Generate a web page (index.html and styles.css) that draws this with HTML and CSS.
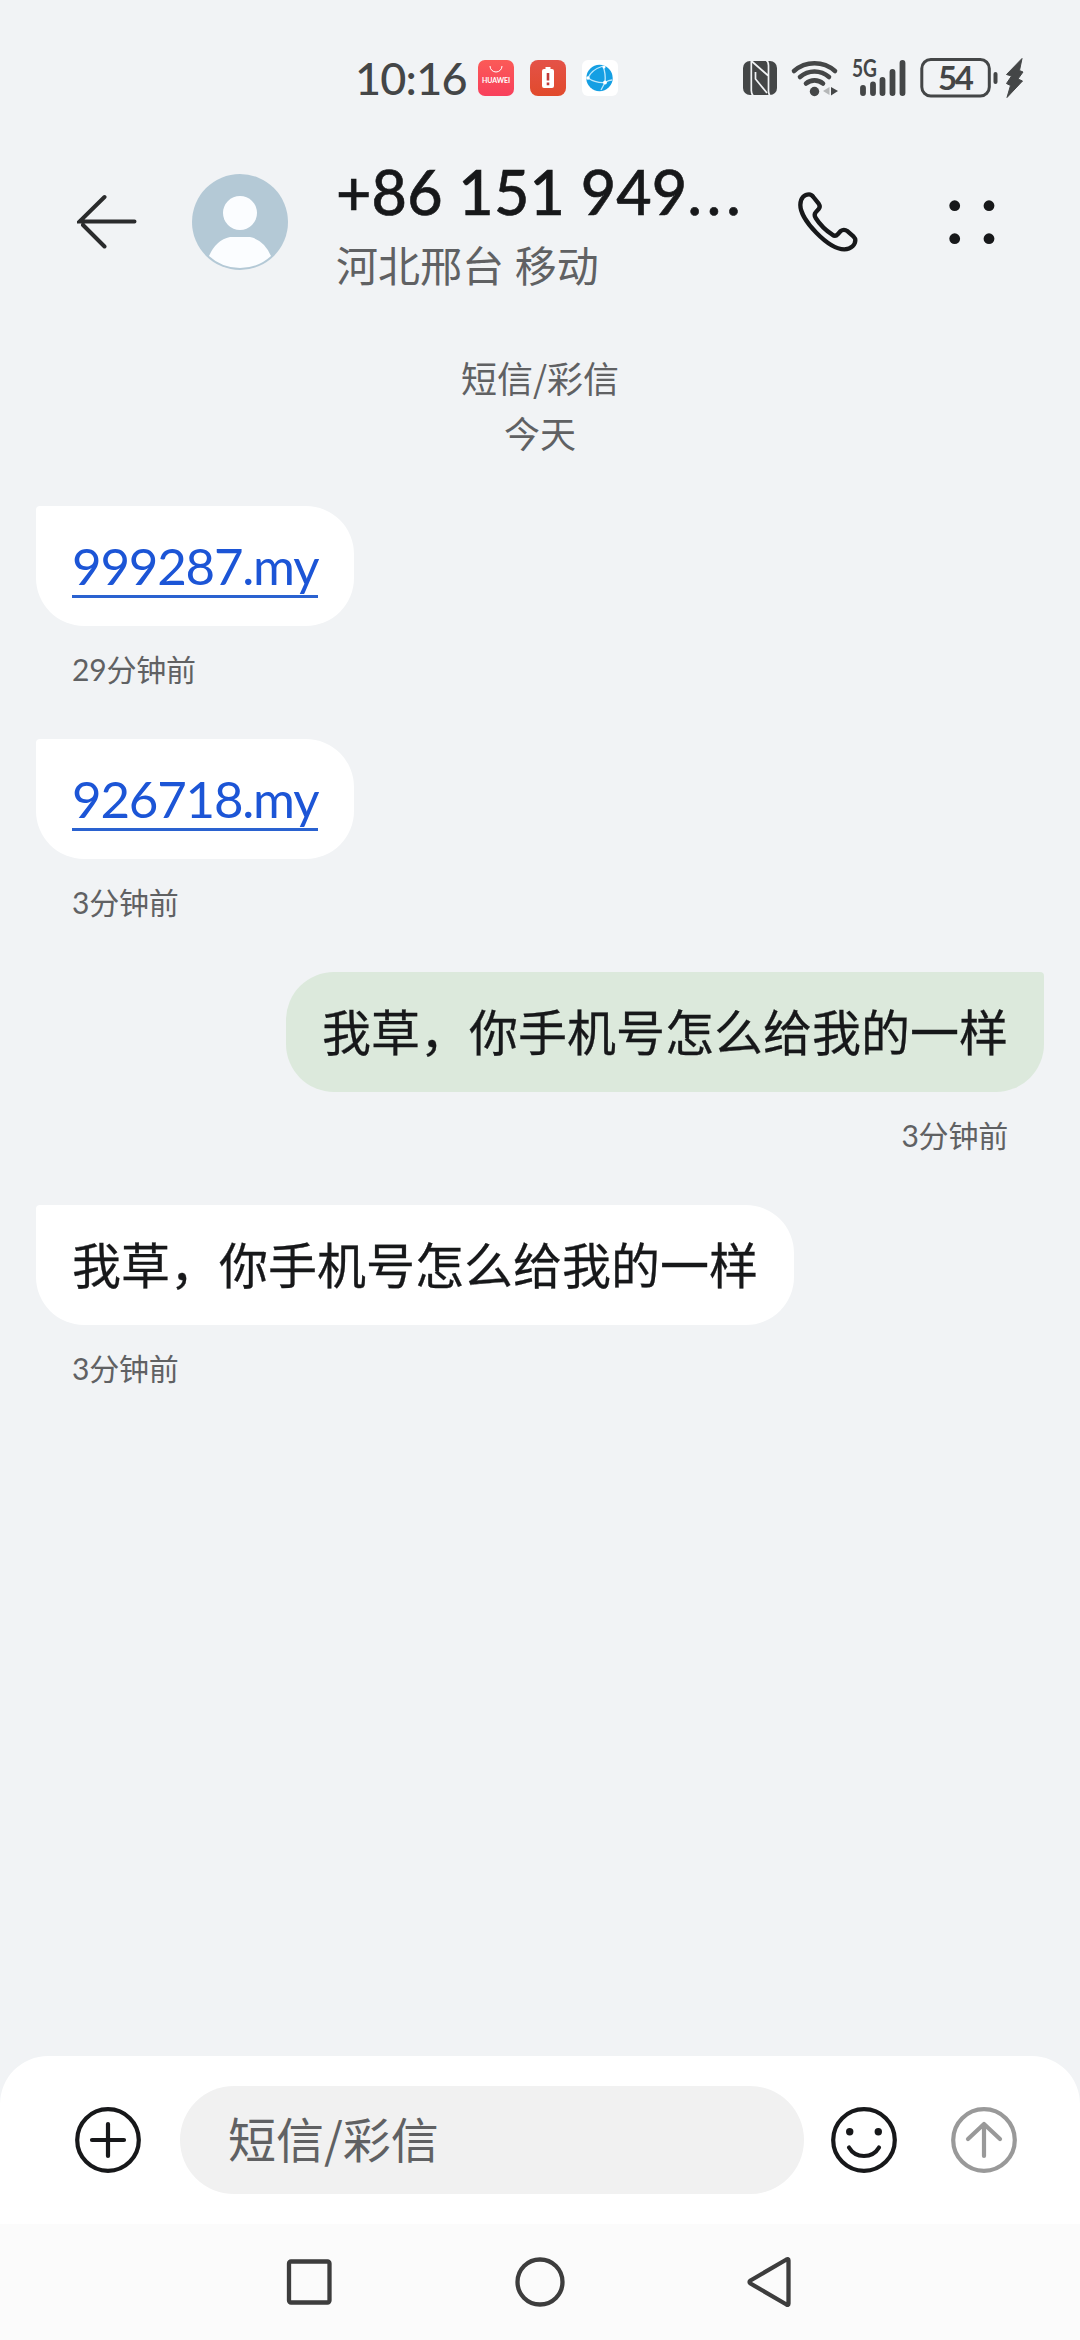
FILE: index.html
```html
<!DOCTYPE html>
<html lang="zh-CN">
<head>
<meta charset="utf-8">
<title>短信/彩信</title>
<link rel="stylesheet" href="styles.css">
</head>
<body>
<div class="screen">
  <div class="status">
    <div class="status-left">
      <span class="clock">10:16</span>
      <svg class="app-icon" viewBox="0 0 36 36">
        <defs><linearGradient id="hw" x1="0" y1="0" x2="0" y2="1"><stop offset="0" stop-color="#fb5a57"/><stop offset="1" stop-color="#f8405c"/></linearGradient></defs>
        <rect width="36" height="36" rx="7" fill="url(#hw)"/>
        <path d="M12 6a6 6 0 0 0 12 0" fill="none" stroke="#fff" stroke-width="1"/>
        <text class="brand" x="18" y="23.3" text-anchor="middle" textLength="28">HUAWEI</text>
      </svg>
      <svg class="app-icon" viewBox="0 0 36 36">
        <defs><linearGradient id="rd" x1="0" y1="0" x2="0" y2="1"><stop offset="0" stop-color="#e45248"/><stop offset="1" stop-color="#e14a2c"/></linearGradient></defs>
        <rect width="36" height="36" rx="8" fill="url(#rd)"/>
        <path d="M15.500 7h5v2h1.500a2 2 0 0 1 2 2v15a2 2 0 0 1-2 2h-8a2 2 0 0 1-2-2v-15a2 2 0 0 1 2-2h1.500z" fill="#fff"/>
        <path d="M18 13v7.500M18 22.500v2.700" stroke="#c03a3a" stroke-width="2.600"/>
      </svg>
      <svg class="app-icon" viewBox="0 0 36 36">
        <rect width="36" height="36" rx="6" fill="#fff"/>
        <circle cx="17.500" cy="18" r="13.200" fill="#149fe3"/>
        <path d="M6 18Q9 10 21 6M6 18Q13 23 23 22.500M21 6Q24 14 23 22.500M23 22.500Q27 20 30 20M23 22.500L19 30" fill="none" stroke="#bfe8fb" stroke-width="1.300"/>
        <circle cx="6" cy="18" r="1.800" fill="#fff"/><circle cx="22" cy="7" r="1.500" fill="#fff"/><circle cx="23" cy="22.500" r="1.900" fill="#fff"/>
      </svg>
    </div>
    <svg class="status-right" viewBox="740 46 288 64">
      <rect x="743" y="61" width="34" height="34" rx="7" fill="#444647"/>
      <path d="M751.300 61V90.500q0 3.500 2 5.500M766 60q2.500 1.500 2.500 5.500V91q0 3 1.500 5M752 61.500L768 75.500" fill="none" stroke="#f1f3f5" stroke-width="1.700"/>
      <path d="M755.500 72V79L767 93" fill="none" stroke="#f1f3f5" stroke-width="1.700"/>
      <g fill="none" stroke="#444647" stroke-width="4.600" stroke-linecap="round">
        <path d="M794 71a31 31 0 0 1 41 0"/><path d="M800 77a22 22 0 0 1 29 0"/><path d="M806 83.500a13 13 0 0 1 17 0"/>
      </g>
      <circle cx="814.500" cy="91.500" r="4.700" fill="#444647"/>
      <path d="M829.500 87v8l-6.500-4z" fill="#b5b7b8"/><path d="M831 87v8.500l7-4.500z" fill="#444647"/>
      <text class="net" x="852" y="77.300" textLength="25" lengthAdjust="spacingAndGlyphs">5G</text>
      <path d="M863 88v5M873 84.500v8.500M882.500 80v13M892.500 72v21M902.500 63v30" stroke="#444647" stroke-width="5.800" stroke-linecap="round"/>
      <rect x="921.800" y="59.500" width="67.500" height="36.500" rx="9" fill="none" stroke="#444647" stroke-width="3"/>
      <text class="level" x="956" y="89.500" text-anchor="middle" textLength="36">54</text>
      <rect x="993.500" y="72" width="4" height="12" rx="2" fill="#444647"/>
      <path d="M1022 58.500L1006.500 74.500L1011.500 76L1006.500 83.500L1010.500 85.500L1007 97.500L1022.500 81L1018 79L1023 72L1019.500 70.500Z" fill="#444647" stroke="#444647" stroke-linejoin="round"/>
    </svg>
  </div>

  <header class="header">
    <svg class="back" viewBox="0 0 60 56" fill="none" stroke="#2a2b2c" stroke-width="4" stroke-linecap="round">
      <path d="M27.500 3L2.500 27.500H57.500M27.500 52.500L6 31"/>
    </svg>
    <svg class="avatar" viewBox="0 0 96 96">
      <circle cx="48" cy="48" r="48" fill="#b4c9d6"/>
      <circle cx="48" cy="39" r="17" fill="#fbfdff"/>
      <path d="M17 82Q24 66 38 63H58Q72 66 79 82Q66 94 48 94T17 82Z" fill="#fbfdff"/>
    </svg>
    <div class="contact">
      <div class="number">+86 151 949<span class="dots">...</span></div>
      <div class="place">河北邢台 移动</div>
    </div>
    <svg class="phone" viewBox="114 126 180 180">
      <path d="M147 133C135 133 121 142 121 165C121 210 205 298 253 298C275 298 286 283 286 270Q286 265 281 260L263 244Q252 236 242 243L234 252Q226 261 217 254C200 243 178 221 167 204Q161 194 167 187L176 177Q182 170 176 161L160 141Q155 133 147 133Z" fill="none" stroke="#17181a" stroke-width="13" stroke-linejoin="round"/>
    </svg>
    <svg class="more" viewBox="0 0 46 45" fill="#17181a">
      <circle cx="5.700" cy="5.700" r="5.400"/><circle cx="40" cy="5.700" r="5.400"/><circle cx="5.700" cy="38.700" r="5.400"/><circle cx="40" cy="38.700" r="5.400"/>
    </svg>
  </header>

  <main class="thread">
    <div class="kind">短信/彩信</div>
    <div class="kind">今天</div>
    <div class="message first"><div class="bubble"><a class="link">999287.my</a></div><div class="time">29分钟前</div></div>
    <div class="message"><div class="bubble"><a class="link">926718.my</a></div><div class="time">3分钟前</div></div>
    <div class="message sent"><div class="bubble">我草，你手机号怎么给我的一样</div><div class="time">3分钟前</div></div>
    <div class="message"><div class="bubble">我草，你手机号怎么给我的一样</div><div class="time">3分钟前</div></div>
  </main>

  <footer class="composer">
    <svg class="action" viewBox="0 0 66 66" fill="none" stroke="#17181a" stroke-width="4.200" stroke-linecap="round">
      <circle cx="33" cy="33" r="30.800"/><path d="M33 17V49M17 33H49"/>
    </svg>
    <div class="field">短信/彩信</div>
    <svg class="action" viewBox="0 0 66 66" fill="none" stroke="#17181a" stroke-width="4.200" stroke-linecap="round">
      <circle cx="33" cy="33" r="30.800"/><path d="M18 40.500Q23 49 33 49T48 40.500"/>
      <circle cx="18.700" cy="24.700" r="3.700" fill="#17181a" stroke="none"/><circle cx="47.300" cy="24.700" r="3.700" fill="#17181a" stroke="none"/>
    </svg>
    <svg class="action send" viewBox="0 0 66 66" fill="none" stroke="#999" stroke-width="4.200" stroke-linecap="round" stroke-linejoin="round">
      <circle cx="33" cy="33" r="30.800"/><path d="M33 49V17M17 32L33 17L49 32"/>
    </svg>
  </footer>

  <nav class="nav">
    <svg class="key" viewBox="0 0 50 50"><rect x="5" y="4.500" width="40.500" height="41" rx="2" /></svg>
    <svg class="key" viewBox="0 0 50 50"><circle cx="25" cy="25" r="22.500"/></svg>
    <svg class="key" viewBox="0 0 50 50"><path d="M42.500 3.500V46.500Q42.500 48.500 40.500 47.500L4.500 26.500Q2.500 25 4.500 23.500L40.500 2.500Q42.500 1.500 42.500 3.500Z"/></svg>
  </nav>
</div>
</body>
</html>
```

FILE: styles.css
```css
* { box-sizing: border-box; }

body {
  margin: 0;
  font-family: Lato, "Noto Sans CJK SC", sans-serif;
}

.screen {
  display: flex;
  flex-direction: column;
  width: 1080px;
  height: 2340px;
  background: #f1f3f5;
  color: #17181a;
}

svg { display: block; flex: none; }

/* Status bar */
.status {
  display: flex;
  justify-content: space-between;
  height: 156px;
  padding: 46px 52px 0 355px;
}
.status-left { display: flex; height: 64px; align-items: center; }
.clock {
  width: 123px;
  font-size: 45px;
  font-weight: 500;
  line-height: 44px;
  letter-spacing: -0.8px;
  color: #444647;
}
.app-icon { width: 36px; height: 36px; margin-right: 16px; }
.status-right { width: 288px; height: 64px; }
.brand { font: 700 7px Lato, sans-serif; fill: #fff; }
.net { font: 700 24px Lato, sans-serif; fill: #444647; }
.level { font: 700 33px Lato, sans-serif; fill: #444647; }

/* Contact header */
.header {
  display: flex;
  align-items: center;
  height: 132px;
  padding-left: 77px;
}
.back { width: 60px; height: 56px; }
.avatar { width: 96px; height: 96px; margin-left: 55px; }
.contact { width: 410px; margin-left: 48px; white-space: nowrap; }
.number {
  height: 72px;
  font-size: 61px;
  font-weight: 500;
  line-height: 72px;
  letter-spacing: 0.2px;
  -webkit-text-stroke: 0.6px #17181a;
}
.dots { letter-spacing: 5px; }
.place { height: 60px; font-size: 42px; line-height: 76px; color: #606163; }
.phone { width: 60px; height: 60px; margin-left: 52px; }
.more { width: 46px; height: 45px; margin-left: 91px; }

/* Conversation */
.thread { flex: 1; padding: 62px 36px 0; }
.kind {
  font-family: "Noto Sans CJK SC", sans-serif;
  font-size: 36px;
  line-height: 55px;
  text-align: center;
  color: #606163;
}
.message {
  display: flex;
  flex-direction: column;
  align-items: flex-start;
  height: 233px;
}
.first { margin-top: 46px; }
.bubble {
  height: 120px;
  padding: 0 36px;
  border-radius: 4px 48px 48px 48px;
  background: #fff;
  font-size: 49px;
  line-height: 120px;
  -webkit-text-stroke: 0.3px #17181a;
}
.link {
  display: inline-block;
  height: 70px;
  border-bottom: 3px solid #2a62d0;
  font-size: 51px;
  line-height: 76px;
  letter-spacing: -1.2px;
  color: #1c55d6;
  -webkit-text-stroke: 0;
}
.time {
  padding: 0 36px;
  margin-top: 20px;
  font-size: 30px;
  line-height: 46px;
  letter-spacing: -0.2px;
  color: #606163;
}
.sent { align-items: flex-end; }
.sent .bubble { border-radius: 48px 4px 48px 48px; background: #dce9dc; }

/* Message composer */
.composer {
  display: flex;
  align-items: center;
  height: 168px;
  padding-left: 75px;
  border-radius: 48px 48px 0 0;
  background: #fff;
}
.action { width: 66px; height: 66px; }
.field {
  width: 624px;
  height: 108px;
  margin: 0 27px 0 39px;
  padding-left: 48px;
  border-radius: 54px;
  background: #f1f1f1;
  font-family: "Noto Sans CJK SC", sans-serif;
  font-size: 48px;
  line-height: 102px;
  color: #606163;
}
.send { margin-left: 54px; }

/* System navigation */
.nav {
  display: flex;
  justify-content: center;
  gap: 181px;
  height: 116px;
  padding-top: 33px;
  background: #fbfbfb;
}
.key {
  width: 50px;
  height: 50px;
  fill: none;
  stroke: #3d3d3d;
  stroke-width: 4.3px;
  stroke-linejoin: round;
}
```
